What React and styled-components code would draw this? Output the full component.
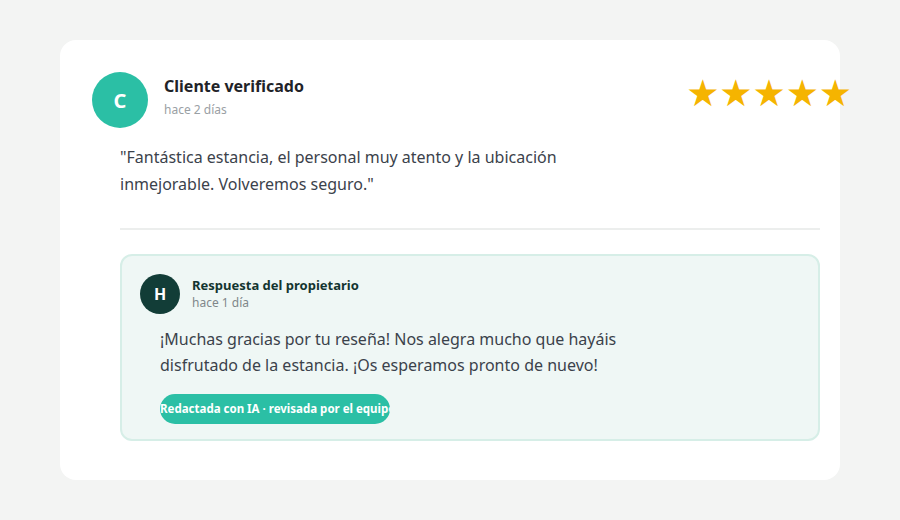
import React from 'react';
import styled, { createGlobalStyle } from 'styled-components';

const GlobalStyle = createGlobalStyle`
  html, body {
    margin: 0;
    padding: 0;
    background: #f3f4f3;
    font-family: "Noto Sans", "Open Sans", sans-serif;
  }
`;

const Page = styled.div`
  width: 900px;
  height: 520px;
  padding: 40px 60px;
  box-sizing: border-box;
`;

const Card = styled.div`
  background: #ffffff;
  border-radius: 16px;
  height: 440px;
  box-sizing: border-box;
  padding: 32px 20px 0 32px;
`;

const Header = styled.div`
  display: flex;
  align-items: center;
  gap: ${(p) => p.gap || 16}px;
`;

const Avatar = styled.div`
  width: ${(p) => p.size}px;
  height: ${(p) => p.size}px;
  border-radius: 50%;
  background: ${(p) => p.bg};
  color: #ffffff;
  display: flex;
  align-items: center;
  justify-content: center;
  font-weight: 700;
  font-size: ${(p) => p.fontSize}px;
  flex-shrink: 0;
`;

const Meta = styled.div`
  display: flex;
  flex-direction: column;
  flex: 1;
  margin-bottom: ${(p) => p.lift || 0}px;
`;

const Name = styled.div`
  font-size: ${(p) => p.size}px;
  font-weight: 700;
  color: ${(p) => p.color};
  line-height: 1.3;
`;

const When = styled.div`
  font-size: 12px;
  color: ${(p) => p.color};
  margin-top: ${(p) => p.gap}px;
`;

const Stars = styled.div`
  display: flex;
  margin-right: -32px;
  margin-top: -14px;
  color: #f5b400;
  font-family: "DejaVu Sans", sans-serif;
  font-size: 37px;
  line-height: 1;
`;

const Body = styled.div`
  padding-left: 28px;
`;

const Quote = styled.p`
  margin: 16px 0 0;
  max-width: 480px;
  font-size: 16px;
  line-height: 27px;
  color: #3b424b;
`;

const Divider = styled.hr`
  border: none;
  height: 2px;
  background: #eceeed;
  margin: 30px 0 24px;
`;

const Reply = styled.div`
  background: #eff7f5;
  border: 2px solid #d6eee7;
  border-radius: 12px;
  padding: 18px 18px 15px;
`;

const ReplyText = styled.p`
  margin: 12px 0 0 20px;
  font-size: 16px;
  line-height: 26px;
  color: #3b424b;
  max-width: 470px;
`;

const Pill = styled.div`
  margin: 16px 0 0 20px;
  width: 230px;
  height: 30px;
  border-radius: 15px;
  background: #2bbfa5;
  color: #ffffff;
  font-size: 11.5px;
  font-weight: 700;
  line-height: 30px;
  white-space: nowrap;
  overflow: hidden;
`;

export default function App() {
  return (
    <>
      <GlobalStyle />
      <Page>
        <Card>
          <Header>
            <Avatar size={56} bg="#2bbfa5" fontSize={20}>C</Avatar>
            <Meta lift={6}>
              <Name size={16} color="#1f2328">Cliente verificado</Name>
              <When color="#9aa0a4" gap={4}>hace 2 días</When>
            </Meta>
            <Stars>★★★★★</Stars>
          </Header>
          <Body>
            <Quote>
              "Fantástica estancia, el personal muy atento y la ubicación inmejorable. Volveremos seguro."
            </Quote>
            <Divider />
            <Reply>
              <Header gap={12}>
                <Avatar size={40} bg="#123d37" fontSize={16}>H</Avatar>
                <Meta lift={0}>
                  <Name size={13} color="#133530">Respuesta del propietario</Name>
                  <When color="#80878a" gap={1}>hace 1 día</When>
                </Meta>
              </Header>
              <ReplyText>
                ¡Muchas gracias por tu reseña! Nos alegra mucho que hayáis disfrutado de la estancia. ¡Os esperamos pronto de nuevo!
              </ReplyText>
              <Pill>Redactada con IA · revisada por el equipo</Pill>
            </Reply>
          </Body>
        </Card>
      </Page>
    </>
  );
}
